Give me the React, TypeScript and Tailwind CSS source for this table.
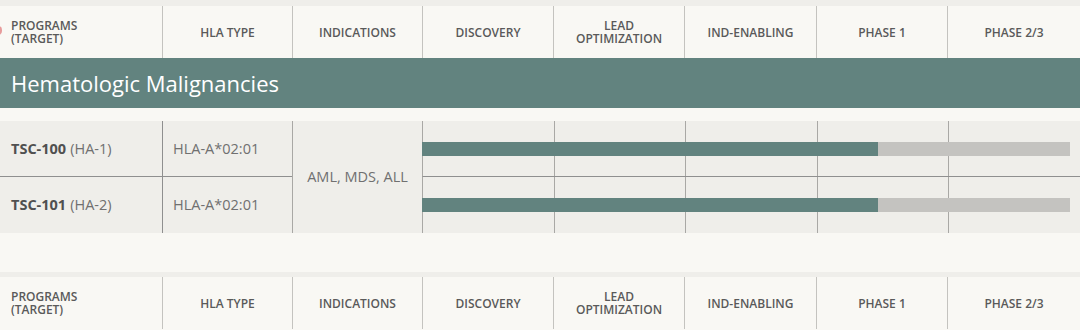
import type { JSX } from "react";

const PHASES = ["DISCOVERY", "LEAD OPTIMIZATION", "IND-ENABLING", "PHASE 1", "PHASE 2/3"];

const PROGRAMS = [
  { name: "TSC-100", target: "(HA-1)", hla: "HLA-A*02:01" },
  { name: "TSC-101", target: "(HA-2)", hla: "HLA-A*02:01" },
];

const font = "font-['Open_Sans','Noto_Sans',sans-serif]";

function HeaderRow({ mark = false }: { mark?: boolean }): JSX.Element {
  const cell =
    "flex items-center justify-center border-l border-[#c4c3bf] px-2 text-center text-[12px] leading-[13px] font-semibold uppercase text-[#5a5a5a]";
  return (
    <div className="relative grid h-[52px] shrink-0 grid-cols-[162px_130px_130px_131px_131px_132px_131px_1fr] bg-[#f9f8f4]">
      {mark && (
        <span className="absolute left-[-6px] top-[20px] h-[9px] w-[8px] rounded-full bg-[#e79b9b]" />
      )}
      <div className="flex items-center pl-[11px] text-[12px] leading-[13px] font-semibold uppercase text-[#5a5a5a]">
        Programs
        <br />
        (Target)
      </div>
      <div className={cell}>HLA Type</div>
      <div className={cell}>Indications</div>
      {PHASES.map((p) => (
        <div key={p} className={cell}>
          {p === "LEAD OPTIMIZATION" ? (
            <span>
              LEAD
              <br />
              OPTIMIZATION
            </span>
          ) : (
            p
          )}
        </div>
      ))}
    </div>
  );
}

function PhaseCell({ last }: { last: boolean }): JSX.Element {
  return (
    <div
      className={`relative grid grid-cols-[131px_131px_132px_131px_1fr] border-l border-[#a9a8a5] ${
        last ? "" : "border-b border-b-[#8f8f8f]"
      }`}
    >
      <div />
      <div className="border-l border-[#a9a8a5]" />
      <div className="border-l border-[#a9a8a5]" />
      <div className="border-l border-[#a9a8a5]" />
      <div className="border-l border-[#a9a8a5]" />
      <div className="absolute left-[-1px] top-[21px] flex h-[14px] w-[648px]">
        <div className="w-[456px] bg-[#62837f]" />
        <div className="flex-1 bg-[#c4c3c0]" />
      </div>
    </div>
  );
}

export default function App(): JSX.Element {
  return (
    <div className={`flex h-[330px] w-[1080px] flex-col overflow-hidden bg-[#f9f8f4] ${font}`}>
      <div className="h-[6px] shrink-0 bg-[#efeeea]" />
      <HeaderRow mark />

      <div className="flex h-[50px] shrink-0 items-center bg-[#62837f] pl-[11px] text-[22px] text-white">
        Hematologic Malignancies
      </div>

      <div className="h-[13px] shrink-0" />

      <div className="grid h-[112px] shrink-0 grid-cols-[162px_130px_130px_1fr] grid-rows-[56px_56px] bg-[#efeeea] text-[14.5px] text-[#707070]">
        {PROGRAMS.map((prog, i) => {
          const last = i === PROGRAMS.length - 1;
          const bb = last ? "" : "border-b border-[#8f8f8f]";
          return [
            <div
              key={`n${i}`}
              className={`flex items-center pl-[11px] ${bb}`}
              style={{ gridRow: i + 1, gridColumn: 1 }}
            >
              <span className="font-bold text-[#505050]">{prog.name}</span>
              <span className="ml-[4px]">{prog.target}</span>
            </div>,
            <div
              key={`h${i}`}
              className={`flex items-center border-l border-[#8f8f8f] pl-[10px] ${bb}`}
              style={{ gridRow: i + 1, gridColumn: 2 }}
            >
              {prog.hla}
            </div>,
            <div key={`p${i}`} className="grid" style={{ gridRow: i + 1, gridColumn: 4 }}>
              <PhaseCell last={last} />
            </div>,
          ];
        })}
        <div className="col-start-3 row-span-2 row-start-1 flex items-center justify-center border-l border-[#a9a8a5]">
          AML, MDS, ALL
        </div>
      </div>

      <div className="h-[39px] shrink-0" />
      <div className="h-[5px] shrink-0 bg-[#efeeea]" />
      <HeaderRow />
    </div>
  );
}
